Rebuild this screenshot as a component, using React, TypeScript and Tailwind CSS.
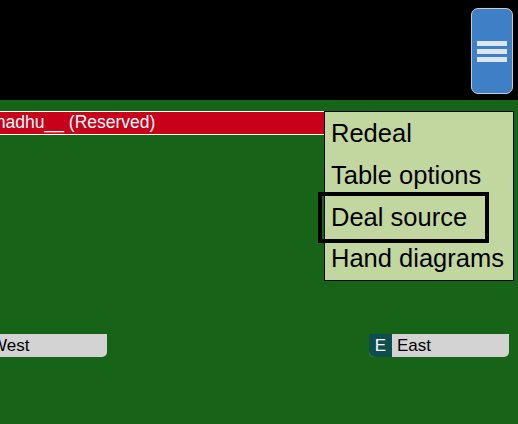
import React from "react";

const menuItems = ["Redeal", "Table options", "Deal source", "Hand diagrams"];

const App = () => {
  return (
    <div
      className="relative w-[518px] h-[424px] overflow-hidden bg-[#176318]"
      style={{ fontFamily: '"Liberation Sans", Arial, sans-serif' }}
    >
      <div className="flex h-[100px] justify-end bg-black pt-[8px] pr-[5px]">
        <button className="flex h-[86px] w-[42px] flex-col items-center justify-center gap-[3px] rounded-[7px] border border-[#c8ccd2] bg-[#3e7fc5]">
          <span className="block h-[5px] w-[30px] bg-[#dbe6f3]" />
          <span className="block h-[5px] w-[30px] bg-[#dbe6f3]" />
          <span className="block h-[5px] w-[30px] bg-[#dbe6f3]" />
        </button>
      </div>

      {/* north seat */}
      <div className="absolute left-0 top-[111px] flex h-[24px] w-[324px] items-center overflow-hidden border-y border-white bg-[#c8001a]">
        <span className="ml-[-9px] whitespace-nowrap text-[17.5px] leading-none text-white">
          madhu__ (Reserved)
        </span>
      </div>

      {/* west seat */}
      <div className="absolute left-0 top-[334px] flex h-[23px] w-[107px] items-center overflow-hidden rounded-br-[5px] bg-[#d3d3d3]">
        <span className="ml-[-9px] whitespace-nowrap text-[17px] leading-none text-black">
          West
        </span>
      </div>

      {/* east seat */}
      <div className="absolute left-[369px] top-[334px] flex h-[23px] w-[140px] items-center overflow-hidden rounded-b-[5px] bg-[#d3d3d3]">
        <span className="flex h-full w-[23px] items-center justify-center bg-[#0e4e4c] text-[17px] leading-none text-white">
          E
        </span>
        <span className="ml-[5px] text-[17px] leading-none text-black">East</span>
      </div>

      {/* menu */}
      <div className="absolute left-[324px] top-[111px] flex h-[170px] w-[190px] flex-col border border-black bg-[#c2d7a0] pt-[1px]">
        {menuItems.map((item) => (
          <div
            key={item}
            className="flex h-[42px] items-center pl-[6px] text-[25.5px] leading-none text-black whitespace-nowrap"
          >
            {item}
          </div>
        ))}
      </div>

      {/* focus box */}
      <div className="absolute left-[318px] top-[192px] h-[51px] w-[171px] border-[4px] border-black" />
    </div>
  );
};

export default App;
